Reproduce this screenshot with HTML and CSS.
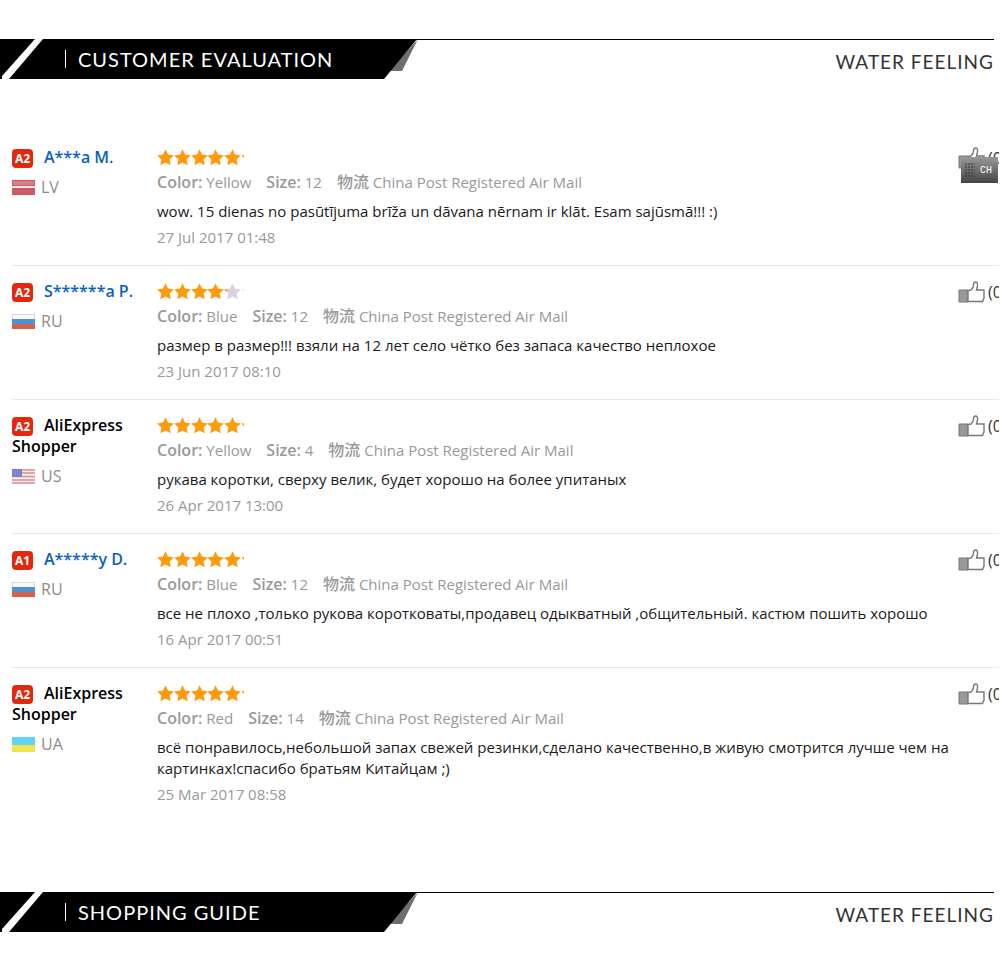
FILE: index.html
```html
<!DOCTYPE html>
<html lang="en">
<head>
  <meta charset="UTF-8">
  <meta name="viewport" content="width=device-width, initial-scale=1.0">
  <title>Customer Evaluation</title>
  <link rel="stylesheet" href="styles.css">
</head>
<body>
  <!-- shared shapes -->
  <svg class="defs" width="0" height="0" aria-hidden="true">
    <symbol id="ribbon" viewBox="0 0 418 40">
      <path d="M418 0 L402 32 H389 Z" fill="#6e6e6e"/>
      <path d="M0 0 H417 L384 40 H0 Z" fill="#000"/>
      <path d="M35 0 H43 L9 40 H2 V37 Z" fill="#fff"/>
      <path d="M0 38 L2 37 V40 H0 Z" fill="#000"/>
    </symbol>
    <symbol id="star" viewBox="0 0 17 17">
      <path d="M8.5 .3 L11 5.600 L16.800 6.400 L12.600 10.500 L13.700 16.300 L8.500 13.600 L3.300 16.300 L4.400 10.500 L.2 6.400 L6 5.600 Z"/>
    </symbol>
    <symbol id="stars-5" viewBox="0 0 87 17">
      <g fill="#ff9a0c">
        <use href="#star" width="17" height="17"/>
        <use href="#star" x="17" width="17" height="17"/>
        <use href="#star" x="34" width="17" height="17"/>
        <use href="#star" x="50" width="17" height="17"/>
        <use href="#star" x="67" width="17" height="17"/>
        <path d="M84.500 6.500 L87 6 V9 Z"/>
      </g>
    </symbol>
    <symbol id="stars-4" viewBox="0 0 87 17">
      <g fill="#ff9a0c">
        <use href="#star" width="17" height="17"/>
        <use href="#star" x="17" width="17" height="17"/>
        <use href="#star" x="34" width="17" height="17"/>
        <use href="#star" x="50" width="17" height="17"/>
      </g>
      <g fill="#d5d5db">
        <use href="#star" x="67" width="17" height="17"/>
        <path d="M84.500 6.500 L87 6 V9 Z" fill="#e8e8ee"/>
      </g>
      <path d="M67.500 6.500 L70 6 V9 Z" fill="#ff9a0c"/>
    </symbol>
    <symbol id="thumb" viewBox="0 0 27 22">
      <path d="M1 9 H10 V21 H1 Z" fill="#999" stroke="#777"/>
      <path d="M10 9.500 L13 9 Q15.500 7 15.500 4 Q15.500 1 17.500 1 Q20 1 19.500 5 L18.500 9 H26 V17 L24.500 20.500 H10 Z" fill="#fff" stroke="#777" stroke-width="1.400"/>
    </symbol>
    <symbol id="flag-lv" viewBox="0 0 23 15">
      <path d="M0 0 H23 V15 H0 Z" fill="#ce5961"/>
      <path d="M1 1 H22 V5 H1 Z" fill="#db7d84"/>
      <path d="M0 6 H23 V8 H0 Z" fill="#fbe9ea"/>
    </symbol>
    <symbol id="flag-ru" viewBox="0 0 23 15">
      <path d="M0 0 H23 V15 H0 Z" fill="#d9d9dd"/>
      <path d="M1 1 H22 V5 H1 Z" fill="#fafafa"/>
      <path d="M0 5 H23 V10 H0 Z" fill="#4d93d6"/>
      <path d="M0 10 H23 V15 H0 Z" fill="#d9604f"/>
    </symbol>
    <symbol id="flag-us" viewBox="0 0 23 15">
      <path d="M0 0 H23 V15 H0 Z" fill="#fbeeee"/>
      <path d="M0 1 H23 M0 4 H23 M0 7.500 H23 M0 11 H23 M0 14 H23" stroke="#e08c8c" stroke-width="1.600"/>
      <path d="M0 0 H10 V8 H0 Z" fill="#7480cf"/>
      <path d="M1 2 H9 M1 4 H9 M1 6 H9" stroke="#929ce0" stroke-dasharray="1 1"/>
    </symbol>
    <symbol id="flag-ua" viewBox="0 0 23 15">
      <path d="M0 0 H23 V8 H0 Z" fill="#5fd3f3"/>
      <path d="M0 8 H23 V15 H0 Z" fill="#f2e44c"/>
    </symbol>
  </svg>

  <header class="section-head">
    <div class="ribbon">
      <svg class="ribbon-bg" aria-hidden="true"><use href="#ribbon"/></svg>
      <h2>CUSTOMER EVALUATION</h2>
    </div>
    <p class="tagline">WATER FEELING</p>
  </header>

  <main class="reviews">
    <article class="review">
      <div class="user">
        <div class="name"><span class="level">A2</span><a href="#">A***a M.</a></div>
        <div class="country"><svg class="flag"><use href="#flag-lv"/></svg>LV</div>
      </div>
      <div class="feedback">
        <svg class="stars" role="img" aria-label="5 stars"><use href="#stars-5"/></svg>
        <div class="meta"><span><b>Color:</b> Yellow</span><span><b>Size:</b> 12</span><span><b class="cjk">物流</b> China Post Registered Air Mail</span></div>
        <p class="text">wow. 15 dienas no pasūtījuma brīža un dāvana nērnam ir klāt. Esam sajūsmā!!! :)</p>
        <time class="date">27 Jul 2017 01:48</time>
      </div>
      <div class="votes">
        <button class="vote" type="button" aria-label="Helpful"><svg class="thumb"><use href="#thumb"/></svg>(0)</button>
        <div class="ime"><svg class="dots" viewBox="0 0 10 14"><path d="M0 1 H10 M0 4 H10 M0 7 H10 M0 10 H10 M0 13 H10" stroke="#333" stroke-dasharray="2 1"/></svg>CH</div>
      </div>
    </article>

    <article class="review">
      <div class="user">
        <div class="name"><span class="level">A2</span><a href="#">S******a P.</a></div>
        <div class="country"><svg class="flag"><use href="#flag-ru"/></svg>RU</div>
      </div>
      <div class="feedback">
        <svg class="stars" role="img" aria-label="4 stars"><use href="#stars-4"/></svg>
        <div class="meta"><span><b>Color:</b> Blue</span><span><b>Size:</b> 12</span><span><b class="cjk">物流</b> China Post Registered Air Mail</span></div>
        <p class="text">размер в размер!!! взяли на 12 лет село чётко без запаса качество неплохое</p>
        <time class="date">23 Jun 2017 08:10</time>
      </div>
      <div class="votes">
        <button class="vote" type="button" aria-label="Helpful"><svg class="thumb"><use href="#thumb"/></svg>(0)</button>
      </div>
    </article>

    <article class="review">
      <div class="user">
        <div class="name"><span class="level">A2</span>AliExpress Shopper</div>
        <div class="country"><svg class="flag"><use href="#flag-us"/></svg>US</div>
      </div>
      <div class="feedback">
        <svg class="stars" role="img" aria-label="5 stars"><use href="#stars-5"/></svg>
        <div class="meta"><span><b>Color:</b> Yellow</span><span><b>Size:</b> 4</span><span><b class="cjk">物流</b> China Post Registered Air Mail</span></div>
        <p class="text">рукава коротки, сверху велик, будет хорошо на более упитаных</p>
        <time class="date">26 Apr 2017 13:00</time>
      </div>
      <div class="votes">
        <button class="vote" type="button" aria-label="Helpful"><svg class="thumb"><use href="#thumb"/></svg>(0)</button>
      </div>
    </article>

    <article class="review">
      <div class="user">
        <div class="name"><span class="level">A1</span><a href="#">A*****y D.</a></div>
        <div class="country"><svg class="flag"><use href="#flag-ru"/></svg>RU</div>
      </div>
      <div class="feedback">
        <svg class="stars" role="img" aria-label="5 stars"><use href="#stars-5"/></svg>
        <div class="meta"><span><b>Color:</b> Blue</span><span><b>Size:</b> 12</span><span><b class="cjk">物流</b> China Post Registered Air Mail</span></div>
        <p class="text">все не плохо ,только рукова коротковаты,продавец одыкватный ,общительный. кастюм пошить хорошо</p>
        <time class="date">16 Apr 2017 00:51</time>
      </div>
      <div class="votes">
        <button class="vote" type="button" aria-label="Helpful"><svg class="thumb"><use href="#thumb"/></svg>(0)</button>
      </div>
    </article>

    <article class="review">
      <div class="user">
        <div class="name"><span class="level">A2</span>AliExpress Shopper</div>
        <div class="country"><svg class="flag"><use href="#flag-ua"/></svg>UA</div>
      </div>
      <div class="feedback">
        <svg class="stars" role="img" aria-label="5 stars"><use href="#stars-5"/></svg>
        <div class="meta"><span><b>Color:</b> Red</span><span><b>Size:</b> 14</span><span><b class="cjk">物流</b> China Post Registered Air Mail</span></div>
        <p class="text">всё понравилось,небольшой запах свежей резинки,сделано качественно,в живую смотрится лучше чем на картинках!спасибо братьям Китайцам ;)</p>
        <time class="date">25 Mar 2017 08:58</time>
      </div>
      <div class="votes">
        <button class="vote" type="button" aria-label="Helpful"><svg class="thumb"><use href="#thumb"/></svg>(0)</button>
      </div>
    </article>
  </main>

  <header class="section-head">
    <div class="ribbon">
      <svg class="ribbon-bg" aria-hidden="true"><use href="#ribbon"/></svg>
      <h2>SHOPPING GUIDE</h2>
    </div>
    <p class="tagline">WATER FEELING</p>
  </header>
</body>
</html>
```

FILE: styles.css
```css
* {
  box-sizing: border-box;
}

body {
  margin: 0;
  padding: 39px 0;
  background: #fff;
  color: #1a1a1a;
  font-family: "Open Sans", "Noto Sans CJK SC", sans-serif;
  font-size: 15px;
  line-height: 21px;
}

h2,
p {
  margin: 0;
}

svg {
  display: block;
}

.defs {
  position: absolute;
}

/* section title bars */
.section-head {
  display: flex;
  justify-content: space-between;
  margin-right: 6px;
  font-family: Lato, sans-serif;
  letter-spacing: 1px;
  background: linear-gradient(#000, #000) top / 100% 1px no-repeat;
}

.ribbon {
  position: relative;
  display: flex;
  align-items: center;
  width: 418px;
  height: 40px;
  padding-left: 65px;
}

.ribbon-bg {
  position: absolute;
  top: 0;
  left: 0;
  width: 418px;
  height: 40px;
}

.ribbon h2 {
  position: relative;
  padding-left: 12px;
  border-left: 1px solid #fff;
  color: #fff;
  font-size: 20px;
  font-weight: 400;
  line-height: 18px;
}

.tagline {
  padding-top: 11px;
  color: #333;
  font-size: 19px;
  line-height: 24px;
}

/* reviews */
.reviews {
  padding: 53px 1px 70px 12px;
}

.review {
  display: flex;
  padding: 15px 0 16px;
  border-bottom: 1px solid #e8e8e8;
}

.review:last-child {
  border-bottom: none;
}

.user {
  flex: none;
  width: 130px;
  margin-right: 15px;
}

.name {
  color: #000;
  font-size: 16px;
  font-weight: 600;
}

.name a {
  color: #0a5fc0;
  text-decoration: none;
}

.level {
  display: inline-block;
  width: 21px;
  margin-right: 11px;
  border-radius: 4px;
  background: #e2290f;
  color: #fff;
  font-size: 12px;
  font-weight: 700;
  line-height: 19px;
  text-align: center;
}

.country {
  display: flex;
  align-items: center;
  gap: 6px;
  margin-top: 9px;
  color: #8c8c8c;
  font-size: 16px;
}

.flag {
  width: 23px;
  height: 15px;
}

.feedback {
  flex: 1;
}

.stars {
  width: 87px;
  height: 17px;
  margin: 2px 0 5px;
}

.meta {
  display: flex;
  gap: 15px;
  color: #999;
  line-height: 22px;
}

.meta b {
  font-size: 16px;
  font-weight: 600;
}

.meta .cjk {
  font-weight: 500;
}

.text {
  margin: 8px 0 4px;
}

.date {
  display: block;
  margin-bottom: 1px;
  color: #999;
  line-height: 22px;
}

.votes {
  position: relative;
  flex: none;
  width: 41px;
  overflow: hidden;
}

.vote {
  display: flex;
  align-items: center;
  gap: 3px;
  padding: 0;
  border: none;
  background: none;
  color: #333;
  font: inherit;
  font-size: 16px;
  cursor: pointer;
}

.thumb {
  flex: none;
  width: 27px;
  height: 22px;
}

/* keyboard layout indicator over the first vote */
.ime {
  position: absolute;
  top: 10px;
  left: 3px;
  display: flex;
  align-items: center;
  gap: 5px;
  width: 37px;
  height: 26px;
  padding-left: 4px;
  background: linear-gradient(#999, #444);
  color: #fff;
  font: 10px "Liberation Mono", monospace;
}

.dots {
  width: 10px;
  height: 14px;
}
```
